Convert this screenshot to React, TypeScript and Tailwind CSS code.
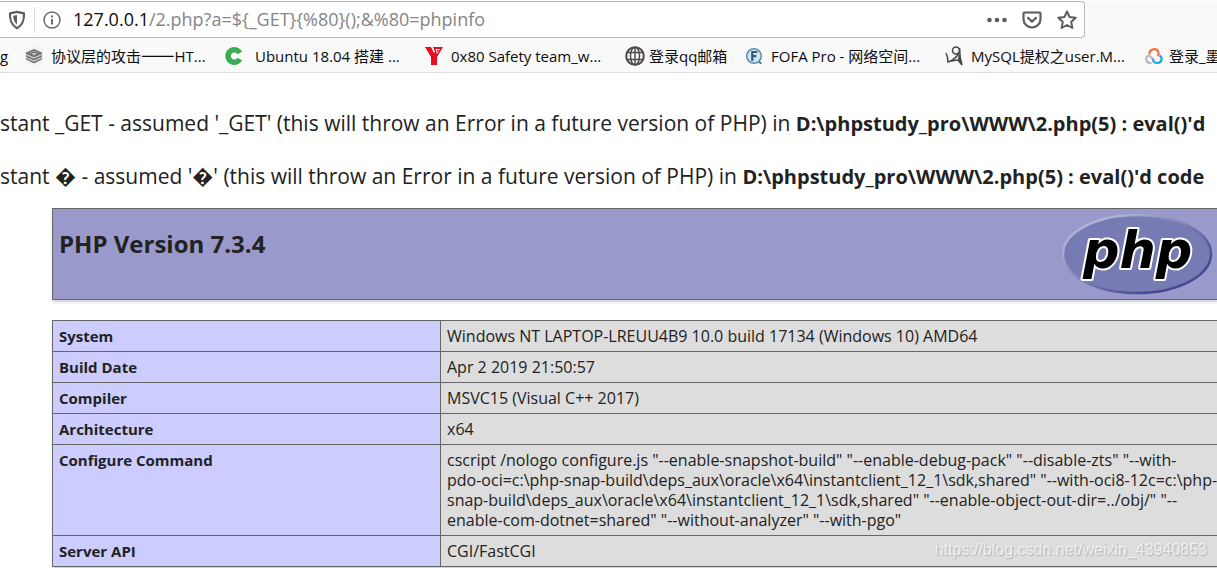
import type { ReactNode } from "react";

const bookmarks: { title: ReactNode; icon: ReactNode; className: string }[] = [
  {
    title: (
      <>
        协议层的攻击<span className="font-['Noto_Sans_CJK_SC',sans-serif] text-[20px] leading-none">——</span>HT...
      </>
    ),
    className: "w-[200px] gap-2",
    icon: (
      <svg viewBox="0 0 18 18" className="size-[18px] shrink-0" fill="none">
        <rect width="18" height="18" fill="#f3f3f3" />
        <path d="M1 5.500 9 2l8 3.500v7L9 16.500l-8-4z" fill="#777" />
        <path d="M1 7.500 9 11l8-3.500M1 10.500l8 3.500 8-3.500" stroke="#e0e0e0" strokeWidth="1" />
        <path d="m5 6 4-2 4 2-4 2z" fill="#ddd" />
        <path d="m6 6.500 3-1.500 3 1.500" stroke="#444" />
      </svg>
    ),
  },
  {
    title: "Ubuntu 18.04 搭建 ...",
    className: "w-[200px] gap-3",
    icon: (
      <svg viewBox="0 0 18 18" className="size-[18px] shrink-0" fill="none">
        <path d="M14.700 12A6.200 6.200 0 1 1 14.700 6" stroke="#3aad53" strokeWidth="5.500" />
      </svg>
    ),
  },
  {
    title: "0x80 Safety team_w...",
    className: "w-[200px] gap-2",
    icon: (
      <svg viewBox="0 0 18 18" className="size-[18px] shrink-0">
        <path d="M0 0h6l3 6 1-1-2-5h10l-6 10v8H6v-8z" fill="#e60f1e" />
        <path d="M10.500 2H15l-3 5z" fill="#f9f9fa" />
        <path d="M12 3h2l-1.500 2.500z" fill="#e60f1e" />
      </svg>
    ),
  },
  {
    title: "登录qq邮箱",
    className: "w-[120px] gap-1",
    icon: (
      <svg viewBox="0 0 20 20" className="size-5 shrink-0" fill="none" stroke="#4b4b4d" strokeWidth="1.500">
        <circle cx="10" cy="10" r="8.800" strokeWidth="2" />
        <ellipse cx="10" cy="10" rx="4.500" ry="8.800" />
        <path d="M10 1v18M2 6.500h16M2 13.500h16" />
      </svg>
    ),
  },
  {
    title: "FOFA Pro - 网络空间...",
    className: "w-[200px] gap-2",
    icon: (
      <svg viewBox="0 0 18 18" className="size-[18px] shrink-0" fill="none">
        <rect width="18" height="18" fill="#fff" />
        <circle cx="9" cy="9" r="7.300" fill="#d5e5ef" stroke="#5d8eab" strokeWidth="1.600" />
        <path d="M7.300 14V5h5M7.300 9.200h4" stroke="#2c5a7a" strokeWidth="2.200" />
        <path d="m14 15 2.500 1.500" stroke="#456b83" strokeWidth="2" />
      </svg>
    ),
  },
  {
    title: "MySQL提权之user.M...",
    className: "w-[200px] gap-2",
    icon: (
      <svg viewBox="0 0 18 20" className="h-5 w-[18px] shrink-0" fill="none" stroke="#4a4648">
        <circle cx="11" cy="4.500" r="3.500" strokeWidth="1.600" />
        <path d="M1 7c1.500 3 2 6 2 9 4-1 8-4 11-9" strokeWidth="1.500" />
        <path d="M14.500 2c0 6 .5 11 2.500 17l-4-5-7 1" strokeWidth="1.500" />
        <path d="m13.500 9 1.500 0 2 10-4-5z" fill="#4a4648" stroke="none" />
      </svg>
    ),
  },
  {
    title: "登录_墨",
    className: "gap-1.5",
    icon: (
      <svg viewBox="0 0 18 18" className="size-[18px] shrink-0" fill="none" strokeWidth="2.200">
        <path d="M6.500 16H5a4 4 0 0 1-1-7.800L9 13" stroke="#b9b9bd" />
        <path d="M4.500 7a4.600 4.600 0 0 1 9-1.500c.3 1.500 0 2.500-1 3.500" stroke="#f2713c" />
        <path d="M8 12c0 2.500 2 4 4.500 4a4 4 0 0 0 2-7.500" stroke="#1aa9e1" />
      </svg>
    ),
  },
];

const info: { name: string; value: ReactNode }[] = [
  { name: "System", value: "Windows NT LAPTOP-LREUU4B9 10.0 build 17134 (Windows 10) AMD64" },
  { name: "Build Date", value: "Apr 2 2019 21:50:57" },
  { name: "Compiler", value: "MSVC15 (Visual C++ 2017)" },
  { name: "Architecture", value: "x64" },
  {
    name: "Configure Command",
    value: (
      <>
        cscript /nologo configure.js "--enable-snapshot-build" "--enable-debug-pack" "--disable-zts" "--with-
        <br />
        pdo-oci=c:\php-snap-build\deps_aux\oracle\x64\instantclient_12_1\sdk,shared" "--with-oci8-12c=c:\php-
        <br />
        snap-build\deps_aux\oracle\x64\instantclient_12_1\sdk,shared" "--enable-object-out-dir=../obj/" "--
        <br />
        enable-com-dotnet=shared" "--without-analyzer" "--with-pgo"
      </>
    ),
  },
  { name: "Server API", value: "CGI/FastCGI" },
];

function AddressBar() {
  return (
    <div className="mt-px mr-[132px] flex h-[37px] items-center rounded-r-sm border border-l-0 border-[#b9b9bb] bg-white pr-[7px]">
      <button aria-label="Tracking protection" className="ml-2 shrink-0">
        <svg viewBox="0 0 18 20" className="h-5 w-[18px]" fill="none">
          <path d="M9 1.800 16 3.300c.3 6-.5 11-7 14.900C2.500 14.300 1.700 9.300 2 3.300z" stroke="#5d5d5f" strokeWidth="2.200" strokeLinejoin="round" />
          <path d="M9 5v9.700C6 12 5.300 9 5.200 5.800z" fill="#5d5d5f" />
        </svg>
      </button>
      <span className="mx-2 h-[26px] w-px shrink-0 bg-[#dcdcde]" />
      <button aria-label="Site information" className="shrink-0">
        <svg viewBox="0 0 18 18" className="size-[18px]" fill="none" stroke="#6b6b6d">
          <circle cx="9" cy="9" r="8" strokeWidth="1.500" />
          <path d="M9 8v5.500M9 4.500v2" strokeWidth="2" />
        </svg>
      </button>
      <label htmlFor="url" className="ml-3 shrink-0 text-[18px] text-[#0c0c0d]">
        127.0.0.1
      </label>
      <input
        id="url"
        defaultValue="/2.php?a=${_GET}{%80}();&%80=phpinfo"
        className="min-w-0 flex-1 bg-transparent text-[18px] text-[#858587] outline-none"
      />
      <div className="flex shrink-0 items-center gap-[15px] text-[#5d5d5f]">
        <button aria-label="Page actions">
          <svg viewBox="0 0 20 20" className="size-5" fill="currentColor">
            <circle cx="2.500" cy="10" r="2.300" />
            <circle cx="10" cy="10" r="2.300" />
            <circle cx="17.500" cy="10" r="2.300" />
          </svg>
        </button>
        <button aria-label="Save to Pocket">
          <svg viewBox="0 0 20 20" className="size-5" fill="none" stroke="currentColor" strokeWidth="2.200" strokeLinecap="round" strokeLinejoin="round">
            <path d="M2.500 2.500h15c.7 0 1 .3 1 1V9a8.500 8.500 0 0 1-17 0V3.500c0-.7.3-1 1-1z" />
            <path d="m6 7.800 4 3.800 4-3.800" />
          </svg>
        </button>
        <button aria-label="Bookmark this page">
          <svg viewBox="0 0 20 20" className="size-5" fill="none" stroke="currentColor" strokeWidth="2" strokeLinejoin="round">
            <path d="m10 1.500 2.600 5.600 6.100.7-4.500 4.100 1.200 6.100-5.400-3-5.400 3 1.200-6.100-4.500-4.100 6.100-.7z" />
          </svg>
        </button>
      </div>
    </div>
  );
}

function PhpLogo() {
  return (
    <svg viewBox="0 0 152 82" className="mt-1 mr-1 h-[82px] w-[152px] shrink-0" role="img" aria-label="PHP logo">
      <defs>
        <linearGradient id="rim" x1="0" y1="0" x2="1" y2="1">
          <stop offset="0.200" stopColor="#aeb2d5" />
          <stop offset="0.500" stopColor="#777bb3" />
          <stop offset="0.800" stopColor="#484893" />
        </linearGradient>
      </defs>
      <ellipse cx="76" cy="41" rx="74" ry="39" fill="#777bb3" stroke="url(#rim)" strokeWidth="2.500" />
      <text
        x="22"
        y="55"
        className="font-['DejaVu_Sans'] text-[51px] font-bold italic"
        fill="#000"
        stroke="#fff"
        strokeWidth="4"
        strokeLinejoin="round"
        paintOrder="stroke"
      >
        php
      </text>
    </svg>
  );
}

export default function App() {
  return (
    <div className="relative h-screen overflow-hidden bg-white font-['Open_Sans','Noto_Sans_CJK_SC',sans-serif] text-[#222]">
      <header className="border-b border-[#dededf] bg-[#f9f9fa]">
        <AddressBar />
        <nav className="flex h-[34px] items-center overflow-hidden pt-0.5 text-[15px] whitespace-nowrap text-[#0c0c0d]">
          <a href="#blog" className="w-[25px] shrink-0">
            g
          </a>
          {bookmarks.map((b, i) => (
            <a key={i} href="#bookmark" className={`flex shrink-0 items-center ${b.className}`}>
              {b.icon}
              <span>{b.title}</span>
            </a>
          ))}
        </nav>
      </header>

      <main>
        <div className="flex flex-col gap-[21px] pt-[34px] text-[21px] leading-8 whitespace-nowrap">
          <p>
            stant _GET - assumed '_GET' (this will throw an Error in a future version of PHP) in{" "}
            <b className="text-[20px] leading-none">D:\phpstudy_pro\WWW\2.php(5) : eval()'d</b>
          </p>
          <p>
            stant � - assumed '�' (this will throw an Error in a future version of PHP) in{" "}
            <b className="text-[20px] leading-none">D:\phpstudy_pro\WWW\2.php(5) : eval()'d code</b>
          </p>
        </div>

        <div className="mt-4 ml-[52px]">
          <div className="flex h-[92px] items-start justify-between border border-r-0 border-[#666] bg-[#9999cc] shadow-[1px_2px_3px_#ccc]">
            <h1 className="mt-[17px] ml-1.5 text-[24px] leading-9 font-bold">PHP Version 7.3.4</h1>
            <PhpLogo />
          </div>

          <table className="mt-5 w-full table-fixed border-collapse text-[16px] leading-5 shadow-[1px_2px_3px_#ccc]">
            <colgroup>
              <col className="w-[388px]" />
              <col />
            </colgroup>
            <tbody>
              {info.map((row) => (
                <tr key={row.name}>
                  <th scope="row" className="border border-[#666] bg-[#ccccff] px-1.5 py-[5px] text-left align-top text-[15px] font-bold">
                    {row.name}
                  </th>
                  <td className="border border-r-0 border-[#666] bg-[#dddddd] px-1.5 py-[5px] align-top whitespace-nowrap">
                    {row.value}
                  </td>
                </tr>
              ))}
            </tbody>
          </table>
        </div>
      </main>

      <div className="absolute right-2.5 bottom-2 font-['Liberation_Sans',sans-serif] text-[16px] leading-5 text-white/70 [text-shadow:1px_1px_1px_rgba(0,0,0,0.2)]">
        https://blog.csdn.net/weixin_43940853
      </div>
    </div>
  );
}
